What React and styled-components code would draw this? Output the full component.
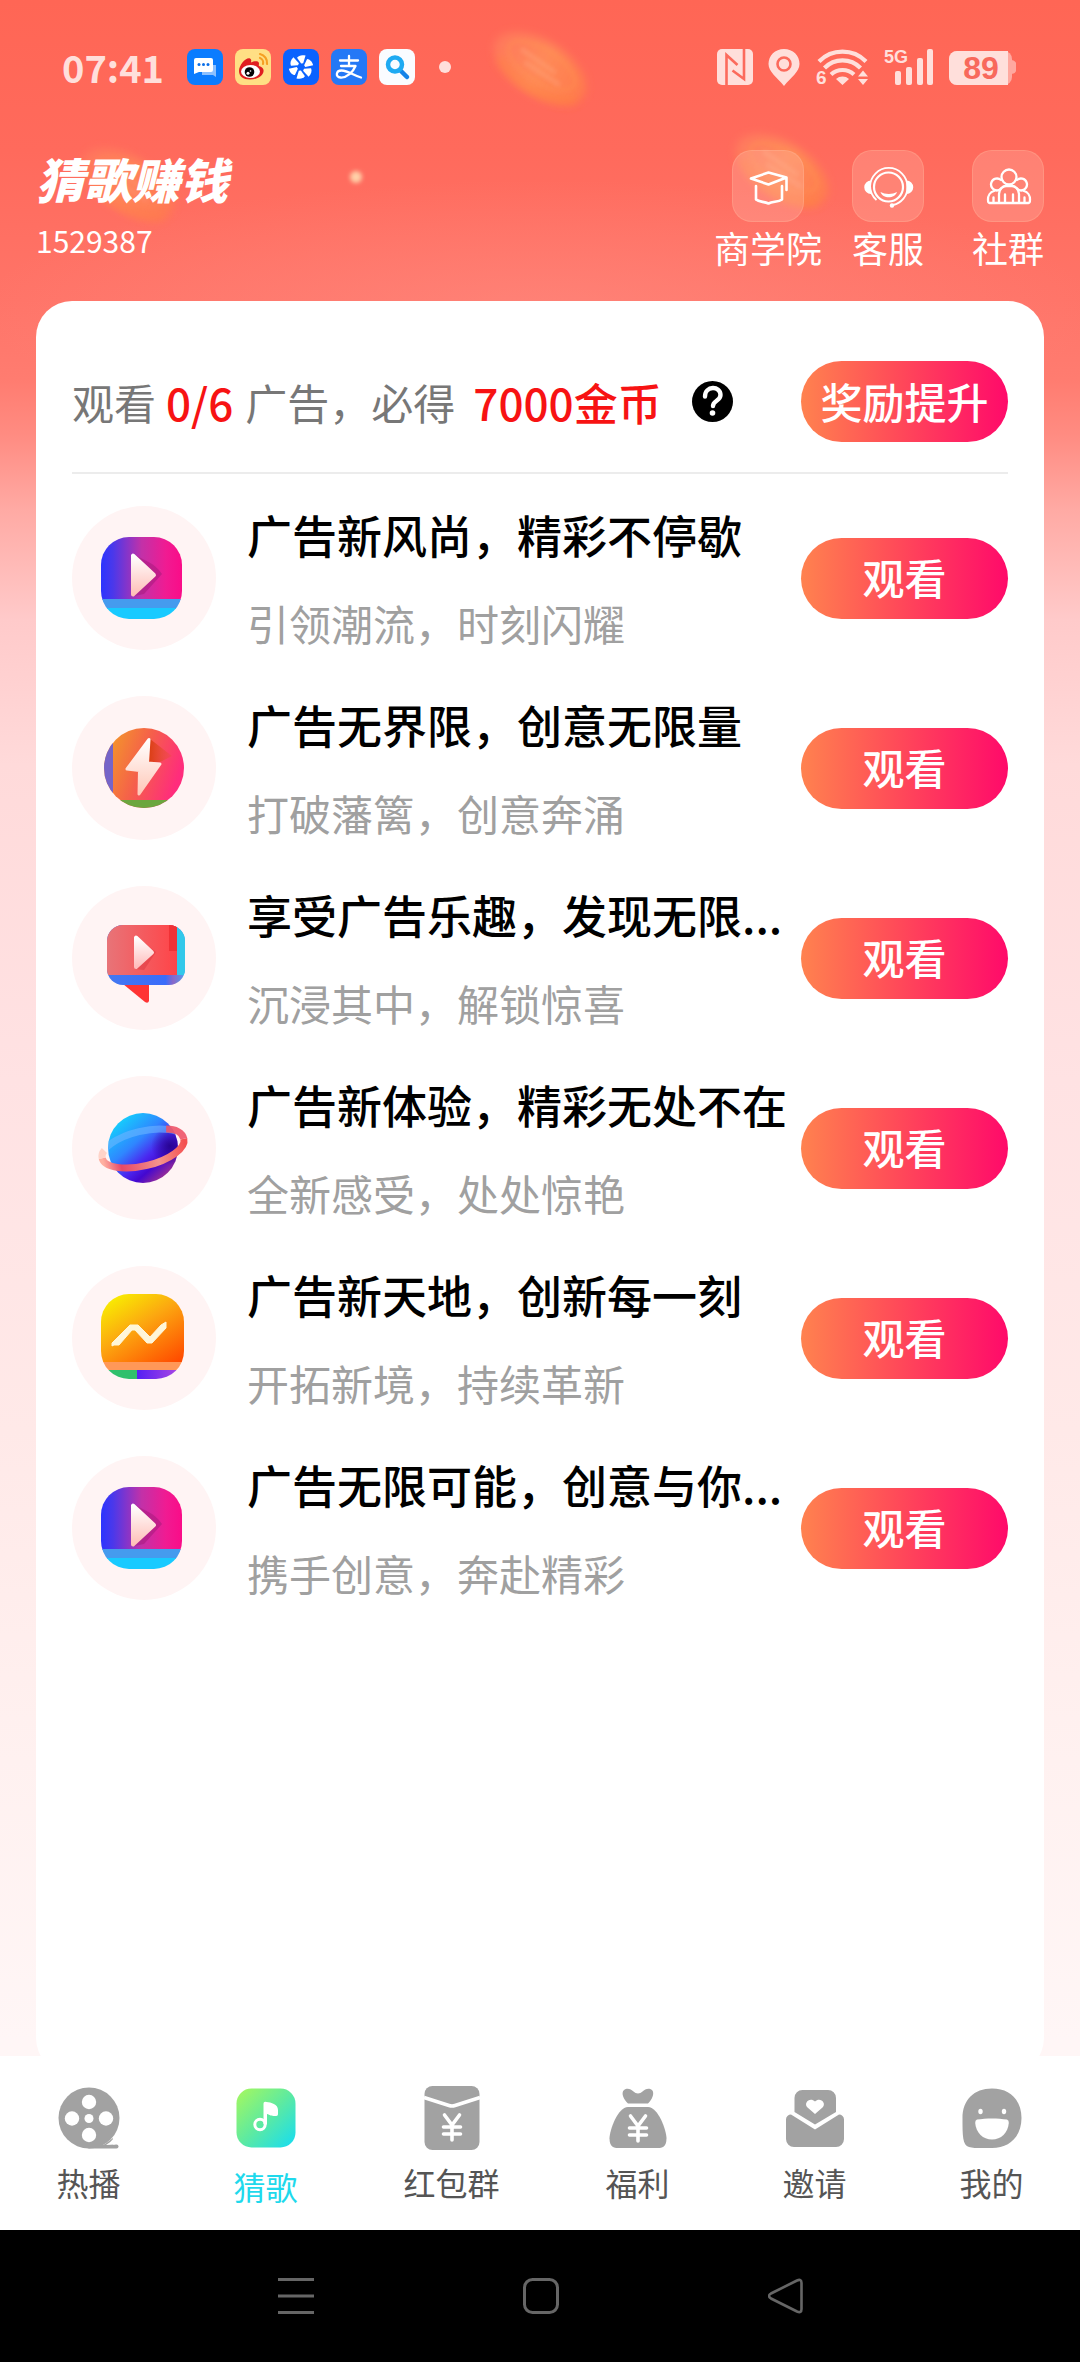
import React from "react";
import styled, { createGlobalStyle } from "styled-components";

const GlobalStyle = createGlobalStyle`
  *, *::before, *::after { box-sizing: border-box; }
  body {
    margin: 0;
    background: #fff;
    font-family: "Noto Sans CJK SC", "Noto Sans", sans-serif;
  }
  button {
    font: inherit;
    border: 0;
    padding: 0;
    margin: 0;
    background: none;
    color: inherit;
    cursor: pointer;
  }
  a { color: inherit; text-decoration: none; }
  h1, h2, p, ul { margin: 0; padding: 0; font-weight: inherit; }
  svg { display: block; flex: none; }
`;

const Page = styled.div`
  min-height: 100vh;
  display: flex;
  flex-direction: column;
`;

const Main = styled.main`
  position: relative;
  z-index: 0;
  flex: 1;
  display: flex;
  flex-direction: column;
  overflow: hidden;
  background:
    radial-gradient(ellipse 560px 130px at 50% 310px, rgba(255, 150, 140, 0.4), rgba(255, 150, 140, 0)),
    linear-gradient(
      to bottom,
      #ff6655 0,
      #ff6a5c 150px,
      #ff7468 300px,
      #ff7c70 380px,
      #ff8c82 436px,
      #ffaaa4 510px,
      #ffcaca 620px,
      #ffdada 765px,
      #ffe2e3 1080px,
      #ffe9e8 1430px,
      #fff1f0 1760px,
      #fff6f6 2040px
    );
`;

const Backdrop = styled.svg`
  position: absolute;
  top: 0;
  left: 0;
  width: 100%;
  height: auto;
  z-index: -1;
`;

/* ---------- status bar ---------- */

const StatusBar = styled.div`
  height: 134px;
  padding: 0 64px 0 62px;
  display: flex;
  align-items: center;
  justify-content: space-between;
  color: #ffdfdb;
`;

const StatusGroup = styled.div`
  display: flex;
  align-items: center;
  gap: ${(p) => p.$gap}px;
`;

const Clock = styled.time`
  width: 113px;
  font-size: 38px;
  line-height: 40px;
  font-weight: 700;
`;

const MoreDot = styled.span`
  width: 12px;
  height: 12px;
  margin-left: 12px;
  border-radius: 50%;
  background: currentColor;
`;

/* ---------- header ---------- */

const Header = styled.header`
  display: flex;
  justify-content: space-between;
  padding: 16px 36px 36px;
  color: #fff;
`;

const AppTitle = styled.h1`
  font-size: 48px;
  line-height: 56px;
  font-weight: 900;
  font-style: italic;
`;

const UserId = styled.p`
  margin-top: 16px;
  font-size: 30px;
  line-height: 36px;
`;

const Actions = styled.div`
  display: flex;
  gap: 48px;
`;

const Action = styled.button`
  width: 72px;
  display: flex;
  flex-direction: column;
  align-items: center;
  gap: 7px;
  font-size: 36px;
  line-height: 36px;
  white-space: nowrap;
`;

const ActionTile = styled.span`
  width: 72px;
  height: 72px;
  border-radius: 20px;
  border: 1px solid rgba(255, 190, 160, 0.3);
  background: rgba(255, 190, 175, 0.28);
  display: grid;
  place-items: center;
`;

/* ---------- card ---------- */

const Card = styled.section`
  flex: 1;
  margin: 0 36px -18px;
  padding: 60px 36px;
  border-radius: 36px;
  background: #fff;
`;

const Summary = styled.div`
  display: flex;
  align-items: center;
  justify-content: space-between;
  padding-bottom: 30px;
  border-bottom: 2px solid #ececec;
`;

const SummaryText = styled.div`
  display: flex;
  align-items: center;
  font-size: 42px;
  line-height: 60px;
  color: #777;
  white-space: nowrap;
`;

const Highlight = styled.strong`
  margin: 0 ${(p) => p.$after}px 0 ${(p) => p.$before}px;
  font-size: 44px;
  font-weight: 500;
  color: #f71313;
`;

const Pill = styled.button`
  flex: none;
  width: 207px;
  height: 81px;
  padding-bottom: 2px;
  border-radius: 41px;
  background: linear-gradient(90deg, #ff824f, #ff4c58 45%, #ff0a6a);
  color: #fff;
  font-size: 42px;
  line-height: 60px;
  font-weight: 500;
  white-space: nowrap;
`;

const AdList = styled.ul`
  list-style: none;
  padding-top: 32px;
  display: flex;
  flex-direction: column;
  gap: 46px;
`;

const AdRow = styled.li`
  display: flex;
  align-items: center;
  height: 144px;
`;

const AdIcon = styled.span`
  flex: none;
  width: 144px;
  height: 144px;
  border-radius: 50%;
  background: #fff4f4;
`;

const AdText = styled.div`
  flex: 1;
  min-width: 0;
  height: 144px;
  padding-left: 31px;
  display: flex;
  flex-direction: column;
  justify-content: space-between;
  white-space: nowrap;
`;

const AdTitle = styled.h2`
  font-size: 45px;
  line-height: 58px;
  font-weight: 500;
  color: #000;
`;

const AdSub = styled.p`
  font-size: 42px;
  line-height: 54px;
  font-weight: 400;
  color: #a0a0a0;
`;

/* ---------- bottom bars ---------- */

const TabBar = styled.nav`
  height: 174px;
  padding-top: 30px;
  display: grid;
  grid-template-columns: 59fr 59fr 65fr 59fr 59fr 59fr;
  background: #fff;
  position: relative;
`;

const Tab = styled.a`
  display: flex;
  flex-direction: column;
  align-items: center;
  gap: ${(p) => (p.$active ? 18 : 14)}px;
  font-size: 32px;
  line-height: 36px;
  color: ${(p) => (p.$active ? "#1fd9ec" : "#555")};
  white-space: nowrap;
`;

const SystemBar = styled.nav`
  height: 132px;
  padding-left: 2px;
  display: flex;
  align-items: center;
  justify-content: center;
  gap: 209px;
  background: #000;
`;

/* ---------- drawings ---------- */

const Coin = ({ x, y, strength = 1 }) => (
  <g transform={`translate(${x} ${y}) rotate(32)`} opacity={strength}>
    <ellipse rx="52" ry="27" fill="url(#coinFill)" filter="url(#soft)" />
    <path d="M-40 12A50 24 0 0 0 48 8" fill="none" stroke="#ff8438" strokeWidth="7" opacity=".5" filter="url(#soft)" />
    <ellipse cy="-3" rx="38" ry="16" fill="none" stroke="#ff9450" strokeWidth="3" opacity=".4" filter="url(#fine)" />
    <path d="M-26 -6L16 -4M-16 3L26 4" stroke="#ffac84" strokeWidth="3" opacity=".5" filter="url(#fine)" />
  </g>
);

const Coins = () => (
  <Backdrop viewBox="0 0 1080 300" aria-hidden="true">
    <defs>
      <linearGradient id="coinFill" x1="0" x2="1">
        <stop offset="0" stopColor="#ff8a60" stopOpacity=".5" />
        <stop offset=".5" stopColor="#ff9058" stopOpacity=".85" />
        <stop offset="1" stopColor="#ff8248" stopOpacity=".7" />
      </linearGradient>
      <filter id="soft" x="-30%" y="-50%" width="160%" height="200%"><feGaussianBlur stdDeviation="4" /></filter>
      <filter id="fine" x="-30%" y="-50%" width="160%" height="200%"><feGaussianBlur stdDeviation="2" /></filter>
    </defs>
    <Coin x={540} y={68} />
    <Coin x={128} y={184} strength={0.75} />
    <Coin x={782} y={170} />
    <circle cx="356" cy="177" r="6" fill="#ffd0a8" filter="url(#fine)" />
  </Backdrop>
);

const AppBadge = ({ fill, children }) => (
  <svg width="36" height="36" viewBox="0 0 36 36" aria-hidden="true">
    <rect width="36" height="36" rx="8" fill={fill} />
    {children}
  </svg>
);

const StatusApps = () => (
  <>
    <AppBadge fill="#0a7cff">
      <path d="M15 16H29V28L26 26H15z" fill="#8cc0ff" />
      <path d="M9 9H24a2 2 0 0 1 2 2V21a2 2 0 0 1-2 2H12L7 25V11a2 2 0 0 1 2-2z" fill="#fff" />
      <g fill="#0a6ee8"><circle cx="12" cy="15.500" r="1.500" /><circle cx="16.500" cy="15.500" r="1.500" /><circle cx="21" cy="15.500" r="1.500" /></g>
    </AppBadge>
    <AppBadge fill="#ffdf84">
      <path d="M25 9a5 5 0 0 1 3 6M25 5a9 9 0 0 1 7 10" fill="none" stroke="#f5a023" strokeWidth="2.200" strokeLinecap="round" />
      <path d="M4 22C4 16 11 8 15 9.500c2 1 1 3 1 4 3-1.500 8-2 8 1 0 1-.5 2 0 2.500 3 1 5 2.500 4.500 5.500C28 27 22 30.500 15 30.500S4 27 4 22z" fill="#e01e20" />
      <ellipse cx="15.500" cy="22.500" rx="9.500" ry="6.500" fill="#fff" />
      <circle cx="14.500" cy="23" r="4.800" fill="#050505" />
      <circle cx="13" cy="24.200" r="1.500" fill="#fff" /><circle cx="15.500" cy="22" r=".8" fill="#fff" />
    </AppBadge>
    <AppBadge fill="#0a62ff">
      <g fill="#fff">
        {[0, 60, 120, 180, 240, 300].map((a) => (
          <path key={a} d="M17.500 14.500L12.500 9.500c1-2.500 4.500-4 8-3.500l-1 8z" transform={`rotate(${a + 10} 18 18)`} />
        ))}
      </g>
    </AppBadge>
    <AppBadge fill="#2478f6">
      <path d="M9 11.500H27M18 7V17M10 17H24.500C22 23 16 29 9.500 28.500 4 28 5 21.500 10.500 21.500 17 21.500 23 26.500 30 28.500" fill="none" stroke="#fff" strokeWidth="2.300" strokeLinecap="round" strokeLinejoin="round" />
    </AppBadge>
    <AppBadge fill="#fafcff">
      <path d="M21 21L28 28" stroke="#1683e8" strokeWidth="4.500" strokeLinecap="round" />
      <circle cx="16" cy="15.500" r="7" fill="none" stroke="#1eaaf2" strokeWidth="4.500" />
    </AppBadge>
  </>
);

const NfcIcon = () => (
  <svg width="36" height="36" viewBox="0 0 36 36" role="img" aria-label="NFC">
    <rect width="36" height="36" rx="5" fill="#ffdfdb" />
    <path d="M9.500 36V6L20.500 16M27 0V30L15.500 21.500" fill="none" stroke="#fc6a5c" strokeWidth="2.600" />
  </svg>
);

const PinIcon = () => (
  <svg width="32" height="38" viewBox="0 0 32 38" role="img" aria-label="定位">
    <path d="M16 1C7 1 .5 7.500 .5 16 .5 24 9 29 16 38 23 29 31.500 24 31.500 16 31.500 7.500 25 1 16 1z" fill="#ffdfdb" />
    <circle cx="16" cy="16" r="6.500" fill="#ffdfdb" stroke="#fc6a5c" strokeWidth="2.600" />
  </svg>
);

const WifiIcon = () => (
  <svg width="54" height="44" viewBox="0 -3 54 44" role="img" aria-label="Wi-Fi 6">
    <g fill="none" stroke="#ffdfdb" strokeWidth="4.200">
      <path d="M4 13.500A33 33 0 0 1 51 13.500" />
      <path d="M9.500 20A25 25 0 0 1 45.500 20" />
      <path d="M16 26.500A17 17 0 0 1 39 26.500" />
    </g>
    <path d="M27.500 37L21 31A10 10 0 0 1 34 31zM48 22.500L53 28.500H43zM48 37L53 31H43z" fill="#ffdfdb" />
    <text x="1" y="36" fontFamily="Liberation Sans, sans-serif" fontSize="19" fontWeight="700" fill="#ffdfdb">6</text>
  </svg>
);

const SignalIcon = () => (
  <svg width="50" height="44" viewBox="0 -3 50 44" role="img" aria-label="5G">
    <text x="0" y="15" fontFamily="Liberation Sans, sans-serif" fontSize="18" fontWeight="700" fill="#ffdfdb">5G</text>
    <g fill="#ffdfdb">
      <rect x="11" y="23" width="6" height="14" rx="2" />
      <rect x="22" y="19" width="6" height="18" rx="2" />
      <rect x="33" y="10" width="6" height="27" rx="2" />
      <rect x="43" y="1" width="6" height="36" rx="2" />
    </g>
  </svg>
);

const BatteryIcon = () => (
  <svg width="67" height="36" viewBox="0 0 67 36" role="img" aria-label="89">
    <path d="M62 11a5 5 0 0 1 5 7 5 5 0 0 1-5 7z" fill="#ffa89f" />
    <rect width="63" height="34" y="2" rx="8" fill="#ffa89f" />
    <path d="M8 2H59V36H8a8 8 0 0 1-8-8V10A8 8 0 0 1 8 2z" fill="#ffdfdb" />
    <text x="32" y="30" textAnchor="middle" fontFamily="Liberation Sans, sans-serif" fontSize="32" fontWeight="700" fill="#f8695c">89</text>
  </svg>
);

const SchoolIcon = () => (
  <svg width="72" height="72" viewBox="0 0 72 72" fill="none" stroke="#fff" strokeWidth="2.600" strokeLinejoin="round" strokeLinecap="round" aria-hidden="true">
    <path d="M18 27.500L35.500 21.500 53.500 26.500 35.500 33.500zM53.500 27V39M23 35V48.500C26 51 31 50.500 35.500 52.500 40 50.500 45.500 51 49 48.500V35" />
  </svg>
);

const ServiceIcon = () => (
  <svg width="72" height="72" viewBox="0 0 72 72" fill="none" stroke="#fff" aria-hidden="true">
    <circle cx="35.500" cy="36" r="14.500" strokeWidth="2.200" />
    <path d="M17 36a18.700 19 0 0 1 37.500 0c0 9-6 16-14.500 18M17 34c0 8 3 12 6.500 15" strokeWidth="1.800" />
    <path d="M18 29.500a6.500 6.500 0 0 0 0 13.500zM53.500 29.500a6.500 6.500 0 0 1 0 13.500z" fill="#fff" stroke="none" />
    <path d="M27.500 41c4.500 2.500 12 2.500 16.500 0-2 7-14.500 7-16.500 0z" fill="#fff" stroke="none" />
    <circle cx="39" cy="54.500" r="2.200" fill="#fff" stroke="none" />
  </svg>
);

const GroupIcon = () => (
  <svg width="72" height="72" viewBox="0 0 72 72" fill="none" stroke="#fff" strokeWidth="2.300" strokeLinejoin="round" strokeLinecap="round" aria-hidden="true">
    <circle cx="36" cy="26" r="7.500" />
    <path d="M28 29a6 6 0 1 0-4 10.500c2 0 3-1 4-2M44 29a6 6 0 1 1 4 10.500c-2 0-3-1-4-2" />
    <path d="M26 51.500V43c0-5 4-8 7-8h6c3 0 7 3 7 8v8.500M32 43.500V51.500M40 43.500V51.500M21 40c-4 1-6 5-6 8.500 0 2 0 3.500 1.500 3.500H55.500C57 52 57 50.500 57 48.500 57 45 55 41 51 40M20.500 46.500v5M51.500 46.500v5" />
  </svg>
);

const HelpIcon = () => (
  <svg width="41" height="41" viewBox="0 0 41 41" aria-hidden="true">
    <circle cx="20.500" cy="20.500" r="20.500" fill="#000" />
    <path d="M13 15.500c0-11 15.500-11 15.500-1.500 0 6-7.500 5.500-7.500 11" fill="none" stroke="#fff" strokeWidth="4.400" strokeLinecap="round" />
    <circle cx="20.500" cy="32" r="2.800" fill="#fff" />
  </svg>
);

const Art = ({ children }) => (
  <svg width="144" height="144" viewBox="0 0 144 144" aria-hidden="true">{children}</svg>
);

const PlayArt = ({ id }) => (
  <Art>
    <defs>
      <linearGradient id={id + "a"}><stop stopColor="#2b35ff" /><stop offset=".15" stopColor="#4b38ea" /><stop offset=".5" stopColor="#c231a8" /><stop offset=".8" stopColor="#f01b92" /><stop offset="1" stopColor="#fa0c88" /></linearGradient>
      <linearGradient id={id + "b"} x2="0" y2="1"><stop stopColor="#fff" /><stop offset="1" stopColor="#ffbfb8" /></linearGradient>
      <clipPath id={id + "c"}><rect x="29" y="31" width="81" height="82" rx="28" /></clipPath>
    </defs>
    <g clipPath={`url(#${id}c)`}>
      <rect x="29" y="31" width="81" height="63" fill={`url(#${id}a)`} />
      <rect x="29" y="93" width="81" height="10" fill="#459bee" />
      <rect x="29" y="102" width="81" height="12" fill="#18caff" />
      <path d="M62 48C74 56 82 56 90 68L72 88 62 90z" fill="#a81a7c" opacity=".55" />
    </g>
    <path d="M61 49.500V88.500L82 69z" fill={`url(#${id}b)`} stroke={`url(#${id}b)`} strokeWidth="4" strokeLinejoin="round" />
  </Art>
);

const BoltArt = () => (
  <Art>
    <defs>
      <linearGradient id="boltBg" y2=".35"><stop offset=".1" stopColor="#f39a28" /><stop offset=".55" stopColor="#f5604a" /><stop offset="1" stopColor="#ff2c7c" /></linearGradient>
      <linearGradient id="boltFg" x2="0" y2="1"><stop stopColor="#fff" /><stop offset="1" stopColor="#ffc8b8" /></linearGradient>
      <linearGradient id="boltShade"><stop stopColor="#d93c10" /><stop offset="1" stopColor="#e8503c" stopOpacity=".3" /></linearGradient>
      <clipPath id="boltClip"><circle cx="72" cy="72" r="40" /></clipPath>
    </defs>
    <g clipPath="url(#boltClip)">
      <rect x="30" y="30" width="84" height="84" fill="url(#boltBg)" />
      <rect x="30" y="30" width="11" height="74" fill="#7564c8" />
      <rect x="30" y="104" width="84" height="10" fill="#6ba63e" />
      <path d="M78 43L100 60 88 66 76 66z" fill="url(#boltShade)" />
    </g>
    <path d="M77 43.500L75.500 67 88 68 67 98 67.500 74.500 55 73z" fill="url(#boltFg)" stroke="url(#boltFg)" strokeWidth="3" strokeLinejoin="round" />
  </Art>
);

const ChatArt = () => (
  <Art>
    <defs>
      <linearGradient id="chatBg"><stop stopColor="#e87478" /><stop offset="1" stopColor="#ff4448" /></linearGradient>
      <linearGradient id="chatBlue"><stop stopColor="#4478f0" /><stop offset=".75" stopColor="#3a6cfa" /><stop offset=".85" stopColor="#8a68c8" /><stop offset="1" stopColor="#4aa0f0" /></linearGradient>
      <linearGradient id="chatFg" x2="0" y2="1"><stop stopColor="#fff" /><stop offset="1" stopColor="#ffbcbc" /></linearGradient>
      <clipPath id="chatClip"><rect x="35" y="39" width="78" height="60" rx="16" /></clipPath>
    </defs>
    <path d="M51 98H77V115Q76 118 73 116z" fill="#ff3434" />
    <g clipPath="url(#chatClip)">
      <rect x="35" y="39" width="78" height="60" fill="url(#chatBlue)" />
      <rect x="105" y="39" width="8" height="50" fill="#32c8ea" />
      <rect x="35" y="39" width="70" height="50" fill="url(#chatBg)" />
      <path d="M97 39h8v26h-8z" fill="#f03236" />
      <path d="M63 50L84 66 72 84 63 83z" fill="#d8303a" opacity=".4" />
    </g>
    <path d="M64 51.500V81L80 66.500z" fill="url(#chatFg)" stroke="url(#chatFg)" strokeWidth="4" strokeLinejoin="round" />
  </Art>
);

const PlanetArt = () => (
  <Art>
    <defs>
      <linearGradient id="planetBg" x1=".15" y1=".1" x2=".85" y2=".9"><stop stopColor="#14d0fc" /><stop offset=".38" stopColor="#2f86ff" /><stop offset=".62" stopColor="#4a28f0" /><stop offset=".78" stopColor="#4408d0" /><stop offset="1" stopColor="#a03090" /></linearGradient>
      <linearGradient id="ringFg"><stop stopColor="#ffb0a0" /><stop offset=".2" stopColor="#e84868" /><stop offset=".65" stopColor="#f4948c" /><stop offset="1" stopColor="#f45050" /></linearGradient>
      <radialGradient id="planetShade"><stop stopColor="#200080" stopOpacity=".8" /><stop offset="1" stopColor="#200080" stopOpacity="0" /></radialGradient>
      <clipPath id="planetClip"><circle cx="71" cy="72" r="35" /></clipPath>
    </defs>
    <circle cx="71" cy="72" r="35" fill="url(#planetBg)" />
    <g clipPath="url(#planetClip)">
      <circle cx="98" cy="70" r="19" fill="url(#planetShade)" />
      <path d="M29 72.500A42 17.400 0 0 1 113 72.500" transform="rotate(-13.400 71 72.500)" fill="none" stroke="#6cb4ff" strokeWidth="7" opacity=".6" />
    </g>
    <g transform="rotate(-13.400 71 72.500)" fill="none" strokeWidth="7">
      <path d="M29 72.500A42 17.400 0 0 0 113 72.500" stroke="url(#ringFg)" />
      <path d="M113 72.500C113 66 107 61 98 59" stroke="#ee5468" opacity=".9" />
      <path d="M29 72.500c0-3 1-5 4-7" stroke="#ffd0c4" opacity=".9" />
    </g>
  </Art>
);

const ChartArt = () => (
  <Art>
    <defs>
      <linearGradient id="chartBg" x1=".1" y1="0" x2=".9" y2="1"><stop stopColor="#f8f400" /><stop offset=".45" stopColor="#fca810" /><stop offset="1" stopColor="#ff4c00" /></linearGradient>
      <linearGradient id="chartPurple"><stop stopColor="#5420f4" /><stop offset="1" stopColor="#b84ce0" /></linearGradient>
      <clipPath id="chartClip"><rect x="29" y="28" width="83" height="85" rx="28" /></clipPath>
    </defs>
    <g clipPath="url(#chartClip)">
      <rect x="29" y="28" width="84" height="68" fill="url(#chartBg)" />
      <rect x="29" y="96" width="84" height="8" fill="#ff9858" />
      <rect x="29" y="104" width="36" height="10" fill="#30c06c" />
      <rect x="65" y="104" width="48" height="10" fill="url(#chartPurple)" />
    </g>
    <path d="M42 79L47 79 60 64 63 64 75 77 80 77 94 62V56L89 59 78 71 66 59 58 59 40 77V80z" fill="#fff6d8" stroke="#fff6d8" strokeWidth="1" strokeLinejoin="round" />
  </Art>
);

const TabArt = ({ children }) => (
  <svg width="64" height="64" viewBox="0 0 64 64" aria-hidden="true">{children}</svg>
);

const GRAY = "#a2a2a2";

const yen = (top) => (
  <path
    d={`M24.500 ${top}L32 ${top + 10}L39.500 ${top}M32 ${top + 10}V${top + 25}M23.500 ${top + 12}H40.500M23.500 ${top + 19}H40.500`}
    fill="none" stroke="#fff" strokeWidth="3.600" strokeLinecap="round"
  />
);

const ReelTab = () => (
  <TabArt>
    <path d="M32 60.500H59.500" stroke={GRAY} strokeWidth="4" strokeLinecap="round" />
    <path d="M48 58L56 52V61H44z" fill={GRAY} />
    <path d="M49 59Q53 57 57 52L62 56 58 58.500z" fill="#fff" />
    <circle cx="32" cy="32" r="30.500" fill={GRAY} />
    <g fill="#fff"><circle cx="32" cy="32.500" r="4.500" /><circle cx="32" cy="16" r="7.200" /><circle cx="15" cy="32.500" r="7.200" /><circle cx="49" cy="32.500" r="7.200" /><circle cx="32" cy="49" r="7.200" /></g>
  </TabArt>
);

const MusicTab = () => (
  <TabArt>
    <defs><linearGradient id="music" x2="1" y2="1"><stop stopColor="#a8f85c" /><stop offset=".5" stopColor="#5eeaa0" /><stop offset="1" stopColor="#14dcf4" /></linearGradient></defs>
    <rect x="2.500" y="2.500" width="59" height="59" rx="15" fill="url(#music)" />
    <circle cx="26" cy="38.500" r="5.200" fill="none" stroke="#fff" strokeWidth="3" />
    <path d="M29.500 38V18a2 2 0 0 1 3-2C37 16.500 44 18 44 24v4c0 2-1.500 2-3 2-4 0-5-1-8-2v10.500z" fill="#fff" />
  </TabArt>
);

const PacketTab = () => (
  <TabArt>
    <rect x="4.500" width="55" height="64" rx="8" fill={GRAY} />
    <path d="M4 11.500L29 19.500Q32 20.500 35 19.500L60 11.500" fill="none" stroke="#fff" strokeWidth="3.600" />
    {yen(29)}
  </TabArt>
);

const BagTab = () => (
  <TabArt>
    <path d="M22 17.500C18 14 14.500 7 18 4 21 1.500 25 3 27.500 5.500 30 8 34 8 36.500 5.500 39 3 43 1.500 46 4 49 7 46 14 42 17.500z" fill={GRAY} />
    <path d="M22 21H42C52 21 60.500 44 60.500 52.500S56 62 52 62H12C8 62 3.500 61 3.500 52.500S12 21 22 21z" fill={GRAY} />
    {yen(30)}
  </TabArt>
);

const InviteTab = () => (
  <TabArt>
    <path d="M11.500 26V12a8 8 0 0 1 8-8H45a8 8 0 0 1 8 8V26L32 38.500z" fill={GRAY} />
    <path d="M8 28.500L32 43.500 56 28.500a5 5 0 0 1 5 5V53a8 8 0 0 1-8 8H11a8 8 0 0 1-8-8V33.500a5 5 0 0 1 5-5z" fill={GRAY} />
    <path d="M32 28L24.500 21.500C20 17 27 10.500 32 15.500 37 10.500 44 17 39.500 21.500z" fill="#fff" />
  </TabArt>
);

const MineTab = () => (
  <TabArt>
    <path d="M32 2.500C50 2.500 61.500 14 61.500 32S50 62 32 62C24 62 14 62.500 9 61 2.500 59 2.500 50 2.500 32 2.500 14 14 2.500 32 2.500z" fill={GRAY} />
    <g fill="#fff"><ellipse cx="20.500" cy="25.500" rx="2.200" ry="2.800" /><ellipse cx="44" cy="25.500" rx="2.200" ry="2.800" /><path d="M17 33.500C26 32 38 32 47 33.500Q49 34 48.800 37C48 47 41 53.500 32 53.500S16 47 15.200 37Q15 34 17 33.500z" /></g>
  </TabArt>
);

/* ---------- data ---------- */

const actions = [
  { label: "商学院", icon: <SchoolIcon /> },
  { label: "客服", icon: <ServiceIcon /> },
  { label: "社群", icon: <GroupIcon /> },
];

const ads = [
  { title: "广告新风尚，精彩不停歇", sub: "引领潮流，时刻闪耀", icon: <PlayArt id="p1" /> },
  { title: "广告无界限，创意无限量", sub: "打破藩篱，创意奔涌", icon: <BoltArt /> },
  { title: "享受广告乐趣，发现无限...", sub: "沉浸其中，解锁惊喜", icon: <ChatArt /> },
  { title: "广告新体验，精彩无处不在", sub: "全新感受，处处惊艳", icon: <PlanetArt /> },
  { title: "广告新天地，创新每一刻", sub: "开拓新境，持续革新", icon: <ChartArt /> },
  { title: "广告无限可能，创意与你...", sub: "携手创意，奔赴精彩", icon: <PlayArt id="p2" /> },
];

const tabs = [
  { label: "热播", icon: <ReelTab /> },
  { label: "猜歌", icon: <MusicTab />, active: true },
  { label: "红包群", icon: <PacketTab /> },
  { label: "福利", icon: <BagTab /> },
  { label: "邀请", icon: <InviteTab /> },
  { label: "我的", icon: <MineTab /> },
];

export default function App() {
  return (
    <Page>
      <GlobalStyle />
      <Main>
        <Coins />
        <StatusBar>
          <StatusGroup $gap={12}>
            <Clock>07:41</Clock>
            <StatusApps />
            <MoreDot />
          </StatusGroup>
          <StatusGroup $gap={15}>
            <NfcIcon />
            <PinIcon />
            <WifiIcon />
            <SignalIcon />
            <BatteryIcon />
          </StatusGroup>
        </StatusBar>

        <Header>
          <div>
            <AppTitle>猜歌赚钱</AppTitle>
            <UserId>1529387</UserId>
          </div>
          <Actions>
            {actions.map((a) => (
              <Action key={a.label} type="button">
                <ActionTile>{a.icon}</ActionTile>
                <span>{a.label}</span>
              </Action>
            ))}
          </Actions>
        </Header>

        <Card>
          <Summary>
            <SummaryText>
              <span>观看</span>
              <Highlight $before={10} $after={12}>0/6</Highlight>
              <span>广告，必得</span>
              <Highlight $before={18} $after={30}>7000金币</Highlight>
              <button type="button" aria-label="帮助"><HelpIcon /></button>
            </SummaryText>
            <Pill type="button">奖励提升</Pill>
          </Summary>
          <AdList>
            {ads.map((ad) => (
              <AdRow key={ad.title}>
                <AdIcon>{ad.icon}</AdIcon>
                <AdText>
                  <AdTitle>{ad.title}</AdTitle>
                  <AdSub>{ad.sub}</AdSub>
                </AdText>
                <Pill type="button">观看</Pill>
              </AdRow>
            ))}
          </AdList>
        </Card>
      </Main>

      <TabBar>
        {tabs.map((t) => (
          <Tab key={t.label} href="#" $active={t.active} aria-current={t.active ? "page" : undefined}>
            {t.icon}
            <span>{t.label}</span>
          </Tab>
        ))}
      </TabBar>

      <SystemBar>
        <button type="button" aria-label="最近任务">
          <svg width="36" height="36" viewBox="0 0 36 36"><path d="M0 1.500H36M0 18H36M0 34.500H36" stroke="#666" strokeWidth="3" /></svg>
        </button>
        <button type="button" aria-label="主屏幕">
          <svg width="36" height="36" viewBox="0 0 36 36"><rect x="1.500" y="1.500" width="33" height="33" rx="8" fill="none" stroke="#666" strokeWidth="3" /></svg>
        </button>
        <button type="button" aria-label="返回">
          <svg width="36" height="36" viewBox="0 0 36 36"><path d="M29 2.500Q33.500 .5 33.500 5V31Q33.500 35.500 29 33.500L3 20.500Q-1 18 3 15.500z" fill="none" stroke="#666" strokeWidth="2.600" /></svg>
        </button>
      </SystemBar>
    </Page>
  );
}
